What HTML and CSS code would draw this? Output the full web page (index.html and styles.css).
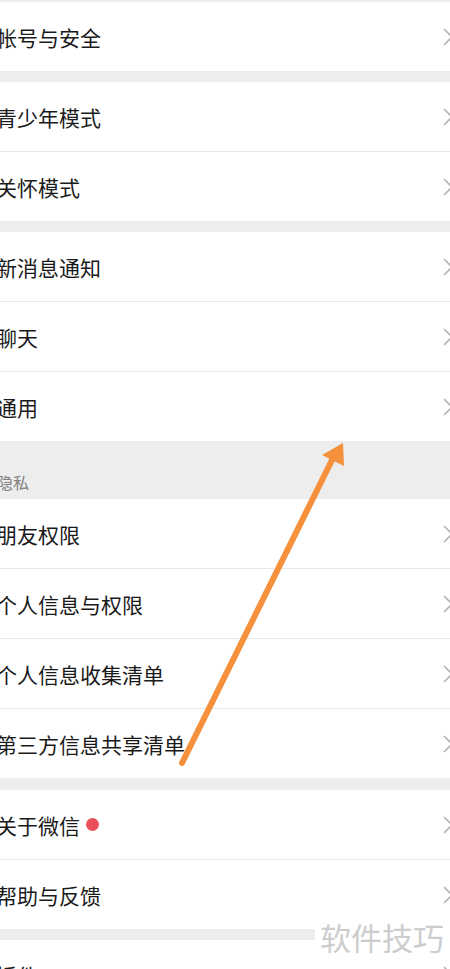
FILE: index.html
```html
<!DOCTYPE html>
<html lang="zh">
<head>
  <meta charset="utf-8">
  <title>设置</title>
  <link rel="stylesheet" href="styles.css">
</head>
<body>
  <div class="page">
    <div class="group first">
      <div class="cell"><span class="label">帐号与安全</span><svg class="chev" viewBox="0 0 10 18"><polyline points="1,1 9,9 1,17"/></svg></div>
    </div>

    <div class="group">
      <div class="cell"><span class="label">青少年模式</span><svg class="chev" viewBox="0 0 10 18"><polyline points="1,1 9,9 1,17"/></svg></div>
      <div class="cell"><span class="label">关怀模式</span><svg class="chev" viewBox="0 0 10 18"><polyline points="1,1 9,9 1,17"/></svg></div>
    </div>

    <div class="group">
      <div class="cell"><span class="label">新消息通知</span><svg class="chev" viewBox="0 0 10 18"><polyline points="1,1 9,9 1,17"/></svg></div>
      <div class="cell"><span class="label">聊天</span><svg class="chev" viewBox="0 0 10 18"><polyline points="1,1 9,9 1,17"/></svg></div>
      <div class="cell"><span class="label">通用</span><svg class="chev" viewBox="0 0 10 18"><polyline points="1,1 9,9 1,17"/></svg></div>
    </div>

    <div class="section-title">隐私</div>
    <div class="group tight">
      <div class="cell"><span class="label">朋友权限</span><svg class="chev" viewBox="0 0 10 18"><polyline points="1,1 9,9 1,17"/></svg></div>
      <div class="cell"><span class="label">个人信息与权限</span><svg class="chev" viewBox="0 0 10 18"><polyline points="1,1 9,9 1,17"/></svg></div>
      <div class="cell"><span class="label">个人信息收集清单</span><svg class="chev" viewBox="0 0 10 18"><polyline points="1,1 9,9 1,17"/></svg></div>
      <div class="cell"><span class="label">第三方信息共享清单</span><svg class="chev" viewBox="0 0 10 18"><polyline points="1,1 9,9 1,17"/></svg></div>
    </div>

    <div class="group wide">
      <div class="cell"><span class="label">关于微信</span><span class="dot"></span><svg class="chev" viewBox="0 0 10 18"><polyline points="1,1 9,9 1,17"/></svg></div>
      <div class="cell"><span class="label">帮助与反馈</span><svg class="chev" viewBox="0 0 10 18"><polyline points="1,1 9,9 1,17"/></svg></div>
    </div>

    <div class="group">
      <div class="cell"><span class="label">插件</span><svg class="chev" viewBox="0 0 10 18"><polyline points="1,1 9,9 1,17"/></svg></div>
    </div>

    <!-- annotation arrow drawn over the list -->
    <svg class="arrow" width="450" height="969" viewBox="0 0 450 969">
      <line x1="182" y1="763" x2="333" y2="458" stroke="#f5903d" stroke-width="6" stroke-linecap="round"/>
      <polygon points="343,443 344,466 322,455" fill="#f5903d"/>
    </svg>

    <div class="watermark">软件技巧</div>
  </div>
</body>
</html>
```

FILE: styles.css
```css
body {
  margin: 0;
  background-color: #ededed;
  font-family: "Noto Sans CJK SC", "Noto Sans", sans-serif;
  overflow: hidden;
}

.page {
  position: relative;
  width: 450px;
  height: 969px;
  overflow: hidden;
  padding-top: 2px;
  box-sizing: border-box;
}

.group {
  background-color: #ffffff;
  margin-top: 11px;
}

.group.first {
  margin-top: 0;
}

.group.tight {
  margin-top: 0;
}

.group.wide {
  margin-top: 12px;
}

.cell {
  height: 69px;
  display: flex;
  align-items: center;
  border-bottom: 1px solid #e8e8e8;
}

.cell:last-child {
  border-bottom: none;
}

.label {
  margin-left: -4px;
  font-size: 21px;
  color: #1a1a1a;
  white-space: nowrap;
}

.dot {
  width: 13px;
  height: 13px;
  border-radius: 50%;
  background-color: #e9505a;
  margin-left: 6px;
}

.chev {
  margin-left: auto;
  margin-right: -3px;
  width: 10px;
  height: 18px;
  flex-shrink: 0;
  fill: none;
  stroke: #b4b4b4;
  stroke-width: 1.6;
}

.section-title {
  height: 58px;
  box-sizing: border-box;
  padding-top: 29px;
  margin-left: -3px;
  font-size: 16px;
  color: #808080;
}

.arrow {
  position: absolute;
  left: 0;
  top: 0;
}

.watermark {
  position: absolute;
  left: 315px;
  top: 918px;
  width: 135px;
  height: 38px;
  background-color: #ffffff;
  color: #cdcdcd;
  font-size: 31px;
  line-height: 38px;
  padding-left: 5px;
  box-sizing: border-box;
  white-space: nowrap;
}
```
